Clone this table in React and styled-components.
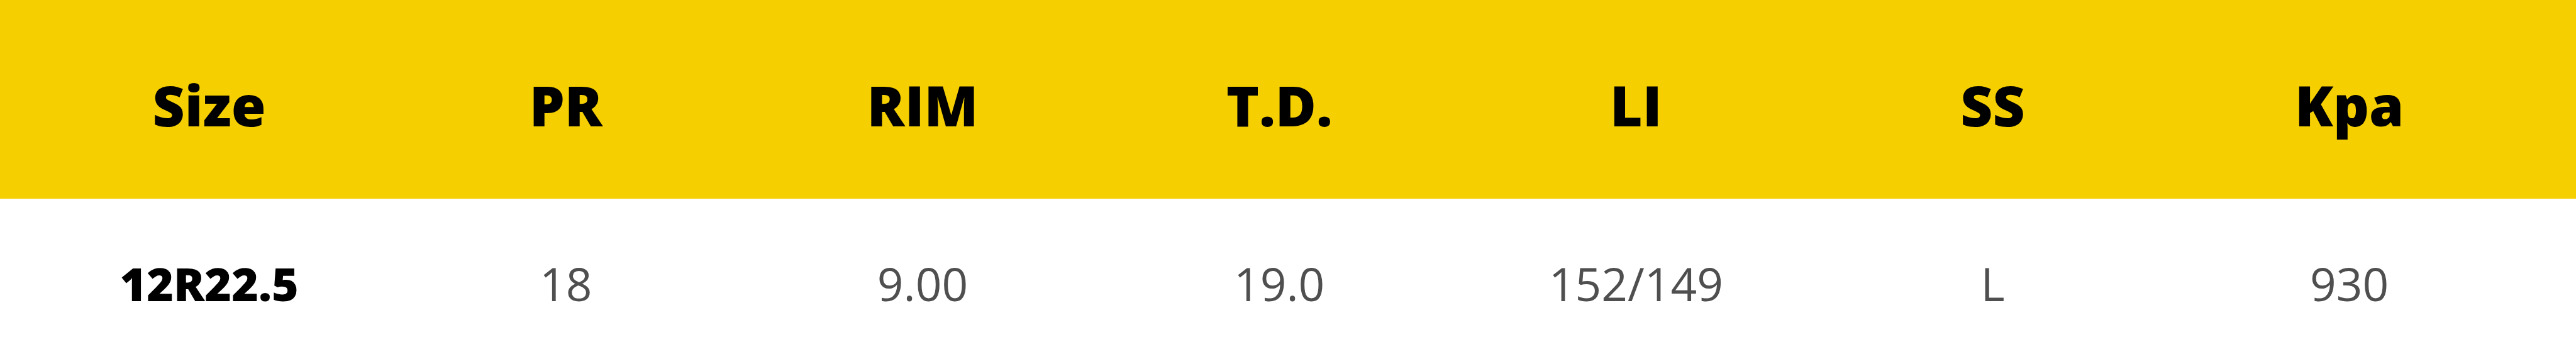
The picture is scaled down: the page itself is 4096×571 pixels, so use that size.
import React from "react";
import styled, { createGlobalStyle } from "styled-components";

const GlobalStyle = createGlobalStyle`
  html, body {
    margin: 0;
    padding: 0;
    background: #ffffff;
  }
  body {
    font-family: "Open Sans", "Noto Sans", sans-serif;
  }
`;

const columns = ["Size", "PR", "RIM", "T.D.", "LI", "SS", "Kpa"];

const rows = [["12R22.5", "18", "9.00", "19.0", "152/149", "L", "930"]];

const Table = styled.div`
  width: 4096px;
  height: 571px;
  display: flex;
  flex-direction: column;
`;

const HeadRow = styled.div`
  height: 316px;
  background-color: #f5cf00;
  display: grid;
  grid-template-columns: repeat(7, 567.2px);
  padding: 123px 0 0 49px;
  box-sizing: border-box;
  align-items: start;
`;

const BodyRow = styled.div`
  flex: 1;
  display: grid;
  grid-template-columns: repeat(7, 567.2px);
  padding: 98px 0 0 49px;
  box-sizing: border-box;
  align-items: start;
`;

const HeadCell = styled.div`
  text-align: center;
  font-size: 88.8px;
  line-height: 88.8px;
  font-weight: 800;
  color: #000000;
`;

const Cell = styled.div`
  text-align: center;
  font-size: 73px;
  line-height: 73px;
  font-weight: ${(p) => (p.$strong ? 800 : 400)};
  color: ${(p) => (p.$strong ? "#000000" : "#4f4f4f")};
`;

export default function App() {
  return (
    <>
      <GlobalStyle />
      <Table>
        <HeadRow>
          {columns.map((c) => (
            <HeadCell key={c}>{c}</HeadCell>
          ))}
        </HeadRow>
        {rows.map((r) => (
          <BodyRow key={r[0]}>
            {r.map((v, i) => (
              <Cell key={i} $strong={i === 0}>
                {v}
              </Cell>
            ))}
          </BodyRow>
        ))}
      </Table>
    </>
  );
}
